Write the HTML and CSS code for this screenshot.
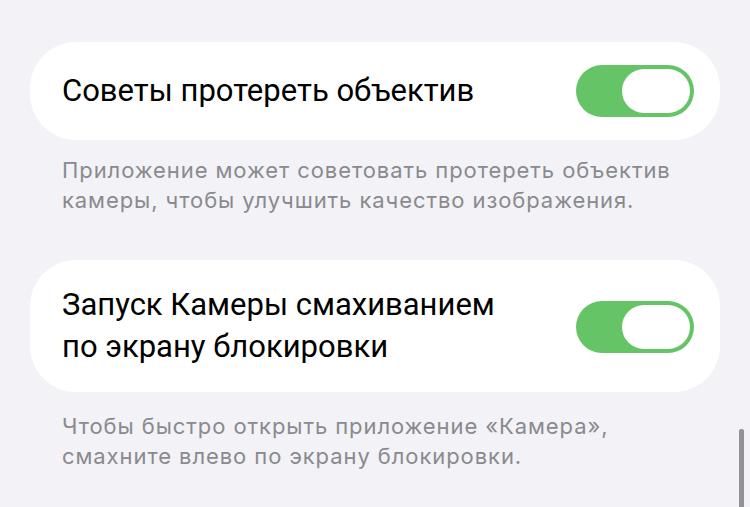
FILE: index.html
```html
<!DOCTYPE html>
<html lang="ru">
<head>
<meta charset="utf-8">
<link rel="stylesheet" href="styles.css">
</head>
<body>
<div class="page">
  <section class="group">
    <div class="card card-single">
      <span class="label">Советы протереть объектив</span>
      <span class="toggle"><span class="knob"></span></span>
    </div>
    <p class="caption">Приложение может советовать протереть объектив<br>камеры, чтобы улучшить качество изображения.</p>
  </section>
  <section class="group">
    <div class="card card-double">
      <span class="label">Запуск Камеры смахиванием<br>по экрану блокировки</span>
      <span class="toggle"><span class="knob"></span></span>
    </div>
    <p class="caption caption-last">Чтобы быстро открыть приложение «Камера»,<br>смахните влево по экрану блокировки.</p>
  </section>
  <div class="scrollbar"></div>
</div>
</body>
</html>
```
FILE: styles.css
```css
html, body {
  margin: 0;
  padding: 0;
  background: #f2f2f7;
}
body {
  width: 750px;
  height: 507px;
  overflow: hidden;
  font-family: Roboto, "Noto Sans", sans-serif;
}
.page {
  position: relative;
  height: 507px;
  box-sizing: border-box;
  padding: 42px 30px 0 30px;
  display: flex;
  flex-direction: column;
  gap: 45px;
}
.group {
  display: flex;
  flex-direction: column;
}
.card {
  background: #ffffff;
  border-radius: 46px;
  display: flex;
  align-items: center;
  justify-content: space-between;
  padding: 0 26px 0 32px;
}
.card-single { height: 98px; }
.card-double { height: 132px; }
.label {
  font-size: 31px;
  line-height: 42px;
  color: #000;
}
.toggle {
  width: 118px;
  height: 52px;
  border-radius: 26px;
  background: #65c466;
  display: flex;
  align-items: center;
  justify-content: flex-end;
  padding-right: 4px;
  box-sizing: border-box;
}
.card-double .toggle {
  margin-top: 2px;
}
.knob {
  width: 68px;
  height: 44px;
  border-radius: 22px;
  background: #fff;
}
.caption {
  margin: 15px 0 0 0;
  padding: 0 32px;
  font-family: Inter, Roboto, sans-serif;
  font-size: 22px;
  line-height: 30px;
  letter-spacing: 0.92px;
  color: #8a8a8e;
  white-space: nowrap;
}
.caption-last {
  margin-top: 19px;
}
.scrollbar {
  position: absolute;
  left: 739px;
  top: 429px;
  width: 5px;
  height: 90px;
  border-radius: 2px;
  background: #939396;
}
```
